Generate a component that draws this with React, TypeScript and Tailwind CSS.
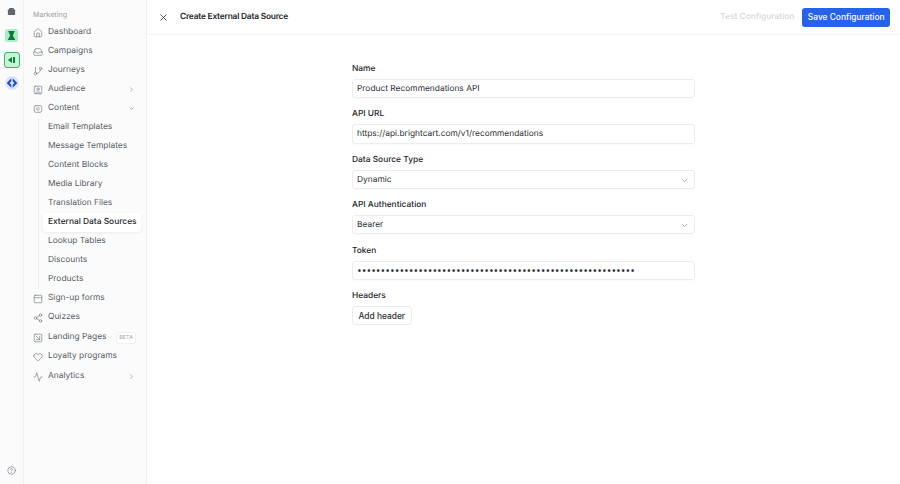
import React from "react";
import {
  Activity,
  ChevronDown,
  ChevronRight,
  CircleHelp,
  GitBranch,
  Heart,
  Home,
  Inbox,
  PanelTop,
  Share2,
  SquareArrowDownRight,
  SquareUser,
  X,
} from "lucide-react";

const sub = [
  "Email Templates",
  "Message Templates",
  "Content Blocks",
  "Media Library",
  "Translation Files",
  "External Data Sources",
  "Lookup Tables",
  "Discounts",
  "Products",
];

const ContentIcon = ({ className, strokeWidth }: { className?: string; strokeWidth?: number }) => (
  <svg viewBox="0 0 24 24" fill="none" stroke="currentColor" strokeWidth={strokeWidth} strokeLinecap="round" className={className}>
    <rect x="3" y="4" width="18" height="16" rx="4" />
    <path d="M15 9.500h-4a2.500 2.500 0 0 0 0 5h4" />
  </svg>
);

const NavRow = ({
  icon: Icon,
  label,
  chevron,
  badge,
}: {
  icon: React.ElementType;
  label: string;
  chevron?: "right" | "down";
  badge?: string;
}) => (
  <div className="flex h-[19px] items-center pl-[9px] pr-[11px] whitespace-nowrap text-[#555b66]">
    <Icon className="mr-[5px] h-[10px] w-[10px] shrink-0 text-[#6b7280]" strokeWidth={1.5} />
    <span>{label}</span>
    {badge && (
      <span className="ml-auto mr-[-1px] rounded-[3px] border border-[#f0f0f1] bg-white px-[2px] text-[5.5px] leading-[10px] text-[#a3a7ae]">
        {badge}
      </span>
    )}
    {chevron === "right" && <ChevronRight className="ml-auto h-[7px] w-[7px] text-[#777c85]" strokeWidth={2} />}
    {chevron === "down" && <ChevronDown className="ml-auto h-[7px] w-[7px] text-[#777c85]" strokeWidth={2} />}
  </div>
);

const Field = ({ label, children }: { label: string; children: React.ReactNode }) => (
  <div className="flex flex-col">
    <label className="mb-[2px] h-[16px] leading-[16px] font-medium text-[#23262c]">{label}</label>
    {children}
  </div>
);

const Box = ({ children, select }: { children: React.ReactNode; select?: boolean }) => (
  <div className="flex h-[19.2px] items-center justify-between rounded-[3px] border border-[#ececee] bg-white pt-[2px] pl-[4px] pr-[5px] text-[#2b2e34] shadow-[0_1px_1px_rgba(0,0,0,0.02)]">
    <span>{children}</span>
    {select && <ChevronDown className="h-[9px] w-[9px] text-[#6b7280]" strokeWidth={1.6} />}
  </div>
);

export default function App() {
  return (
    <div className="flex h-[484px] w-[900px] overflow-hidden bg-white text-[8.4px] leading-[19px] font-['Inter',sans-serif] [text-rendering:geometricPrecision]">
      {/* app rail */}
      <div className="flex w-[24px] shrink-0 flex-col items-center border-r border-[#f1f1f2] bg-[#fbfbfb]">
        <svg viewBox="0 0 10 10" className="mt-[7px] h-[9px] w-[9px]">
          <path d="M1 3.5 3 1h4l2 2.500V9H1z" fill="#62666d" />
        </svg>
        <div className="mt-[13px] flex h-[13px] w-[13px] items-center justify-center rounded-[2px] bg-[#aaeec4]">
          <svg viewBox="0 0 10 10" className="h-[11px] w-[11px]">
            <path d="M2 1h6L6.200 5 8.500 9h-7L3.800 5z" fill="#0b7a3e" />
          </svg>
        </div>
        <div className="mt-[10px] flex h-[16px] w-[16px] items-center justify-center rounded-[3px] border border-[#3fae6c] bg-[#c4f5d5]">
          <svg viewBox="0 0 10 10" className="h-[10px] w-[10px]">
            <path d="M1 5l4-3v6z" fill="#0d7b40" />
            <rect x="6" y="2" width="2" height="6" fill="#0d7b40" />
          </svg>
        </div>
        <div className="mt-[8px] flex h-[14px] w-[14px] items-center justify-center rounded-full bg-[#d7e5fd]">
          <svg viewBox="0 0 10 10" className="h-[12px] w-[12px]">
            <path d="M4.400 1 .6 5l3.800 4V6.500L3 5l1.400-1.500z" fill="#1f4fc4" />
            <path d="M5.600 1 9.400 5 5.600 9V6.500L7 5 5.600 3.500z" fill="#1f4fc4" />
          </svg>
        </div>
        <CircleHelp className="mt-auto mb-[9px] h-[9px] w-[9px] text-[#6b7280]" strokeWidth={1.6} />
      </div>

      {/* section sidebar */}
      <div className="flex w-[123px] shrink-0 flex-col border-r border-[#f0f0f1] bg-[#fbfbfb]">
        <div className="mt-[7px] h-[16px] pl-[9px] text-[7.2px] leading-[15px] text-[#9a9ea6]">Marketing</div>
        <NavRow icon={Home} label="Dashboard" />
        <NavRow icon={Inbox} label="Campaigns" />
        <NavRow icon={GitBranch} label="Journeys" />
        <NavRow icon={SquareUser} label="Audience" chevron="right" />
        <NavRow icon={ContentIcon} label="Content" chevron="down" />
        <div className="ml-[14px] flex flex-col border-l border-[#eeeeef] pl-[4px]">
          {sub.map((s) => (
            <div
              key={s}
              className={
                s === "External Data Sources"
                  ? "mr-[5px] h-[19px] rounded-[4px] bg-white pl-[5px] whitespace-nowrap font-medium text-[#23262c] shadow-[0_1px_3px_rgba(0,0,0,0.07)]"
                  : "h-[19px] pl-[5px] whitespace-nowrap text-[#555b66]"
              }
            >
              {s}
            </div>
          ))}
        </div>
        <NavRow icon={PanelTop} label="Sign-up forms" />
        <NavRow icon={Share2} label="Quizzes" />
        <div className="mt-[1px]">
          <NavRow icon={SquareArrowDownRight} label="Landing Pages" badge="BETA" />
          <NavRow icon={Heart} label="Loyalty programs" />
        </div>
        <div className="mt-[1px]">
          <NavRow icon={Activity} label="Analytics" chevron="right" />
        </div>
      </div>

      {/* main */}
      <div className="flex min-w-0 flex-1 flex-col">
        <div className="flex h-[35px] shrink-0 items-center border-b border-[#f5f5f6] pl-[11px] pr-[10px]">
          <X className="h-[11px] w-[11px] text-[#444850]" strokeWidth={2} />
          <span className="ml-[11px] font-semibold tracking-[-0.22px] text-[#23262c]">Create External Data Source</span>
          <span className="ml-auto font-medium text-[#d5d7da]">Test Configuration</span>
          <button className="ml-[8px] h-[19px] rounded-[3px] bg-[#2563eb] px-[5.5px] font-medium text-white">
            Save Configuration
          </button>
        </div>
        <div className="mt-[26px] ml-[205px] flex w-[343px] flex-col gap-[8.2px]">
          <Field label="Name">
            <Box>Product Recommendations API</Box>
          </Field>
          <Field label="API URL">
            <Box>https://api.brightcart.com/v1/recommendations</Box>
          </Field>
          <Field label="Data Source Type">
            <Box select>Dynamic</Box>
          </Field>
          <Field label="API Authentication">
            <Box select>Bearer</Box>
          </Field>
          <Field label="Token">
            <Box>{"•".repeat(59)}</Box>
          </Field>
          <Field label="Headers">
            <button className="h-[19.2px] w-fit rounded-[3px] border border-[#ececee] bg-white px-[5.5px] font-medium text-[#2b2e34]">
              Add header
            </button>
          </Field>
        </div>
      </div>
    </div>
  );
}
